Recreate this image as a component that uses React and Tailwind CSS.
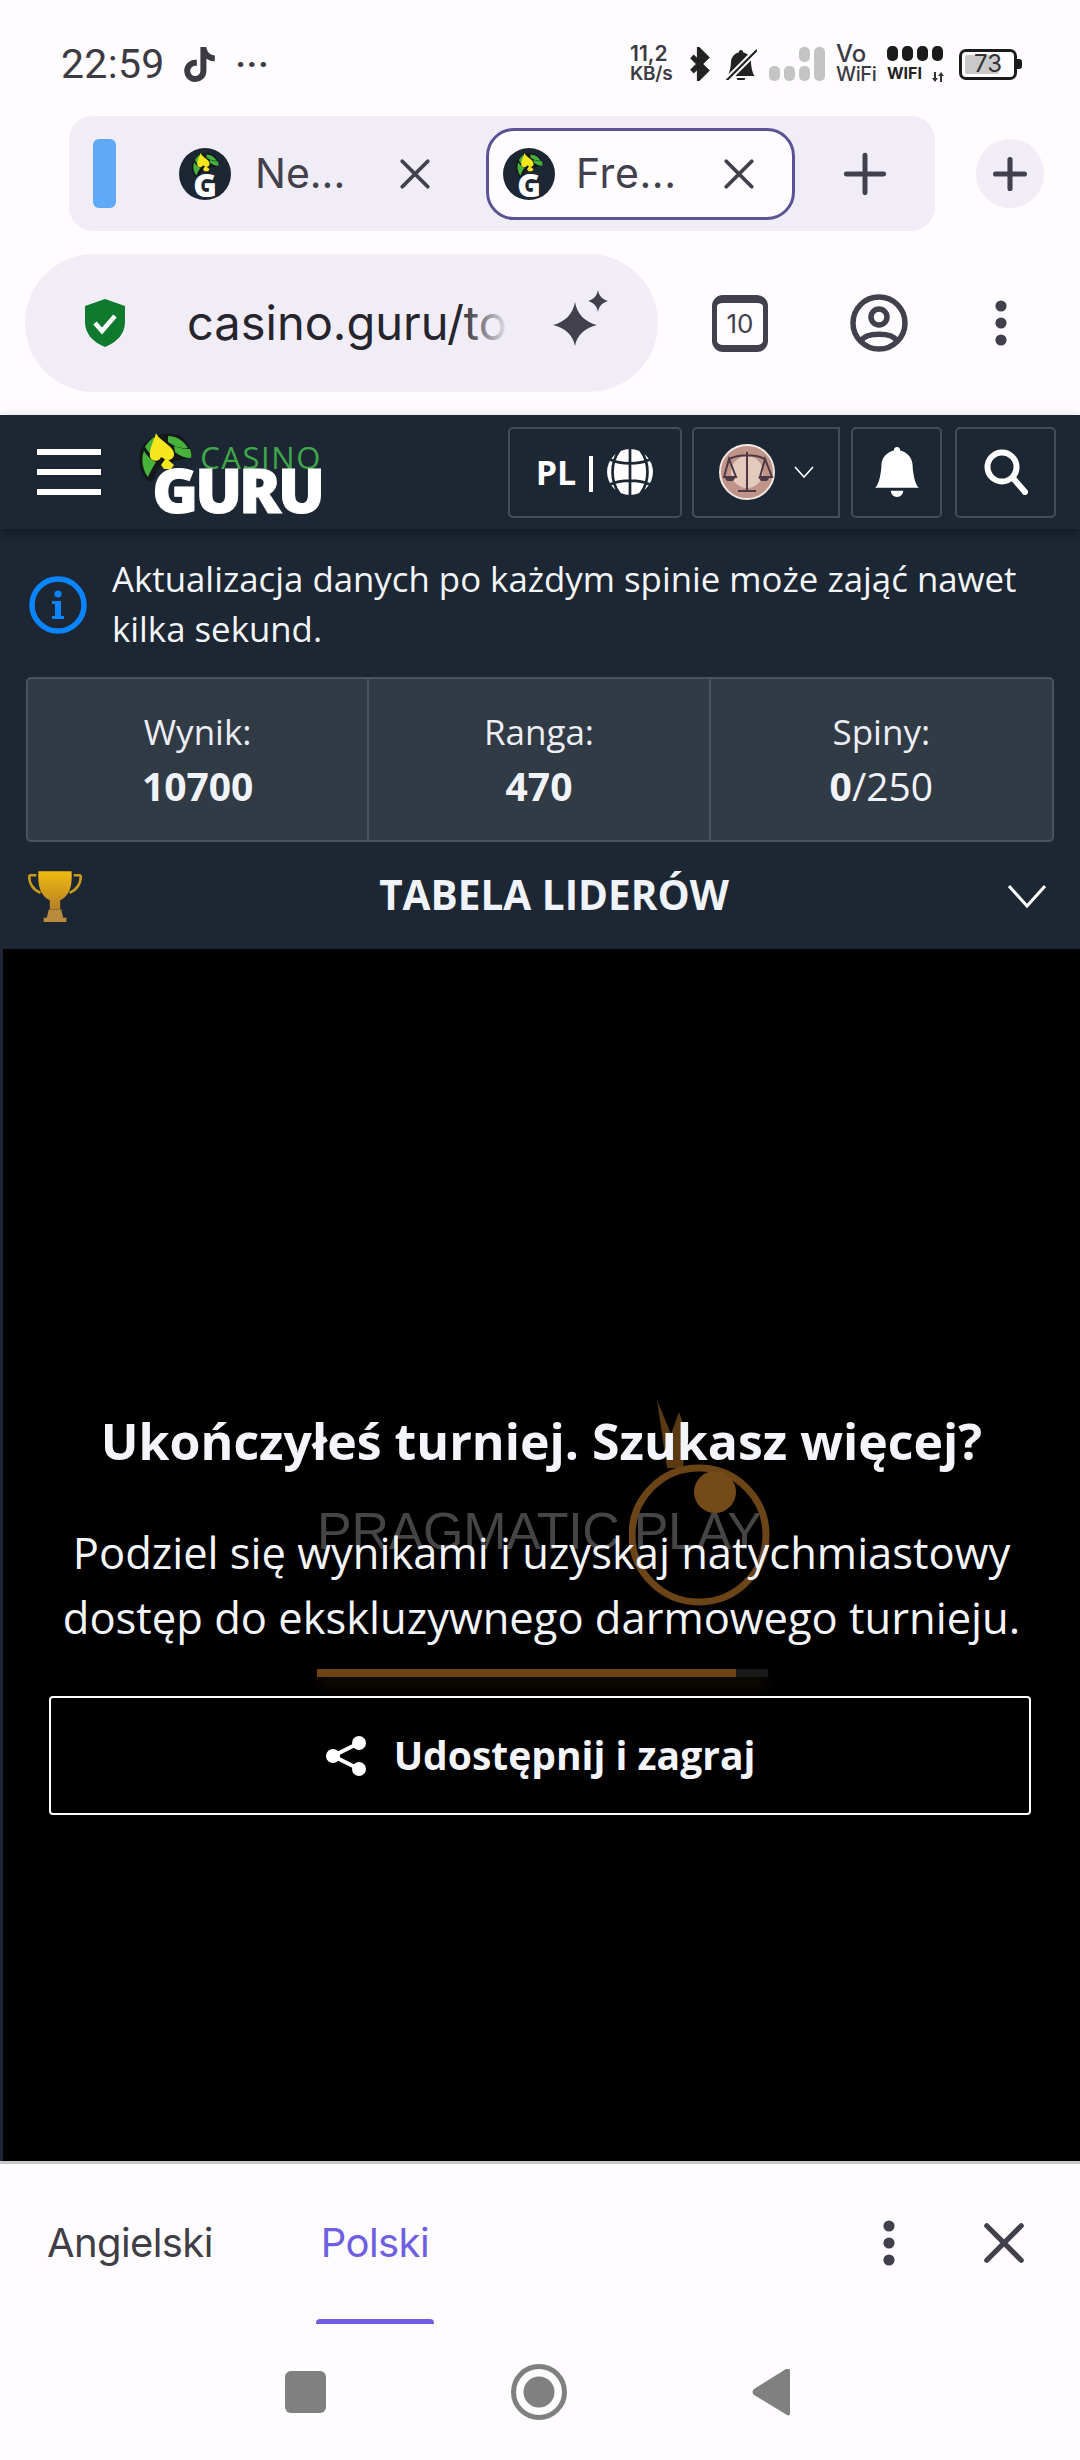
import { BsBellFill, BsBellSlashFill } from "react-icons/bs"
import { FaTiktok } from "react-icons/fa"

const site = { fontFamily: '"Open Sans", sans-serif' }
const ui = { fontFamily: 'Inter, Roboto, sans-serif' }

const Leaf = ({ className }) => (
  <svg viewBox="0 0 54 49" className={className}>
    <path d="M8 47C1 38-1 24 4 14 10 4 24-1 36 1c10 2 17 11 18 23L30 30 20 36 14 49z" fill="#14181a" />
    <path d="M10 44C4 36 3 26 6 18c3 5 7 9 12 11-3 5-6 10-8 15z" fill="#46b23c" />
    <path d="M7 14c3-5 6-8 9-10l2 10c-1 4-1 8 1 11-5-2-9-6-12-11z" fill="#46b23c" />
    <path d="M30 3c8 0 15 4 20 12-6 1-13-1-20-6z" fill="#46b23c" />
    <path d="M36 13c5 2 10 3 16 3 1 3 2 6 1 9-6 0-11-2-16-6z" fill="#46b23c" />
    <path d="M18 0c3 8 19 13 18 22-1 6-8 6-11 3-2-1-3 0-3 1-3 3-9 2-10-2C11 15 16 8 18 0z" fill="#f5e71c" />
    <path d="M28 25l8 7-3 4h-7l-3-4z" fill="#f5e71c" />
  </svg>
)

const Favicon = () => (
  <div className="relative w-[52px] h-[52px] rounded-full bg-[#1c2733] shrink-0">
    <Leaf className="absolute left-[12px] top-[5px] w-[28px] h-[25px]" />
    <span className="absolute inset-x-0 top-[23px] text-center text-[32px] leading-[28px] font-extrabold text-white" style={site}>G</span>
  </div>
)

const Close = ({ size = 34 }) => (
  <svg width={size} height={size} viewBox="0 0 32 32" fill="none" stroke="#43404d" strokeWidth="3.6" strokeLinecap="round">
    <path d="M4 4l24 24M28 4L4 28" />
  </svg>
)

const Plus = ({ size, stroke = 4.5 }) => (
  <svg width={size} height={size} viewBox="0 0 40 40" fill="none" stroke="#43404d" strokeWidth={stroke} strokeLinecap="round">
    <path d="M20 3v34M3 20h34" />
  </svg>
)

const Dots = ({ h = 46 }) => (
  <svg width="14" height={h} viewBox="0 0 14 46" fill="#43404d">
    <circle cx="7" cy="6" r="5.6" />
    <circle cx="7" cy="23" r="5.6" />
    <circle cx="7" cy="40" r="5.6" />
  </svg>
)

const Pip = ({ className }) => <span className={`w-[11px] rounded-[5px] ${className}`} />

const StatusBar = () => (
  <div className="h-[116px] flex items-start text-[#3c3a42]">
    <div className="flex items-center ml-[61px] mt-[46px] h-[36px]" style={{ fontFamily: 'Roboto, sans-serif' }}>
      <span className="text-[41px] leading-none tracking-[0.3px]">22:59</span>
      <FaTiktok className="ml-[17px] text-[35px]" />
      <span className="ml-[19px] text-[34px] font-bold leading-none tracking-[1px]">···</span>
    </div>
    <div className="ml-auto mr-[58px] mt-[43px] flex items-center h-[42px]" style={ui}>
      <div className="w-[48px] text-[21px] leading-[20px] font-semibold">
        <div>11,2</div>
        <div className="text-[19px] tracking-[-0.3px]">KB/s</div>
      </div>
      <svg viewBox="0 0 22 36" className="w-[21px] h-[34px] ml-[11px]" fill="none" stroke="#222" strokeWidth="5.5">
        <path d="M3 10l15 15-7 7V4l7 7L3 26" />
      </svg>
      <BsBellSlashFill className="ml-[15px] text-[32px] text-[#222]" />
      <div className="ml-[12px] flex items-end gap-[4px] h-[34px]">
        <Pip className="h-[15px] bg-[#c4c4c4]" />
        <Pip className="h-[15px] bg-[#c4c4c4]" />
        <div className="flex flex-col gap-[4px]">
          <Pip className="h-[15px] bg-[#c4c4c4]" />
          <Pip className="h-[15px] bg-[#c4c4c4]" />
        </div>
        <Pip className="h-[34px] bg-[#c4c4c4]" />
      </div>
      <div className="ml-[11px] w-[44px] text-[24px] leading-[21px] font-medium">
        <div>Vo</div>
        <div className="text-[20px] tracking-[-0.4px]">WiFi</div>
      </div>
      <div className="ml-[7px] w-[58px]">
        <div className="flex gap-[4px]">
          <Pip className="h-[15px] bg-[#1b1b1b]" />
          <Pip className="h-[15px] bg-[#1b1b1b]" />
          <Pip className="h-[15px] bg-[#1b1b1b]" />
          <Pip className="h-[15px] bg-[#1b1b1b]" />
        </div>
        <div className="flex items-end mt-[3px]">
          <span className="text-[16px] leading-[18px] font-bold text-[#222]">WIFI</span>
          <svg viewBox="0 0 14 10" className="ml-auto w-[14px] h-[10px]" fill="#333">
            <path d="M3 0h2v6h2L4 10 1 6h2zM9 10h2V4h2l-3-4-3 4h2z" />
          </svg>
        </div>
      </div>
      <div className="ml-[14px] flex items-center">
        <div className="w-[58px] h-[31px] rounded-[7px] border-[3px] border-[#1b1b1b] p-[3px] flex items-stretch relative">
          <div className="w-[73%] bg-[#c9c9c9] rounded-[2px]" />
          <span className="absolute inset-0 flex items-center justify-center text-[24px] leading-none text-[#333]">73</span>
        </div>
        <span className="w-[5px] h-[10px] bg-[#1b1b1b] rounded-r-[3px]" />
      </div>
    </div>
  </div>
)

const TabStrip = () => (
  <div className="flex items-center">
    <div className="ml-[69px] w-[866px] h-[115px] rounded-[24px] bg-[#f1edf7] flex items-center" style={ui}>
      <div className="ml-[24px] w-[23px] h-[69px] rounded-[6px] bg-[#60a9f6]" />
      <div className="ml-[63px] flex items-center w-[307px]">
        <Favicon />
        <span className="ml-[24px] text-[41px] text-[#43404d]">Ne...</span>
        <span className="ml-auto mr-[54px]"><Close /></span>
      </div>
      <div className="w-[309px] h-[92px] rounded-[28px] border-[3px] border-[#5c5294] bg-[#fefcff] flex items-center pl-[14px]">
        <Favicon />
        <span className="ml-[21px] text-[41px] tracking-[0.6px] text-[#43404d]">Fre...</span>
        <span className="ml-auto mr-[36px]"><Close /></span>
      </div>
      <div className="ml-[48px]"><Plus size={44} /></div>
    </div>
    <div className="ml-[41px] w-[68px] h-[69px] rounded-full bg-[#f1edf7] flex items-center justify-center">
      <Plus size={34} stroke={6} />
    </div>
  </div>
)

const UrlBar = () => (
  <div className="mt-[23px] h-[138px] flex items-center">
    <div className="ml-[25px] w-[633px] h-[138px] rounded-[69px] bg-[#f1edf7] flex items-center" style={ui}>
      <svg viewBox="0 0 40 48" className="ml-[60px] w-[40px] h-[48px]">
        <path d="M20 0l20 7v16c0 12-8 20-20 25C8 43 0 35 0 23V7z" fill="#0f7a2e" />
        <path d="M10 24l7 8 13-15" fill="none" stroke="#fff" strokeWidth="4.5" />
      </svg>
      <div className="ml-[62px] w-[323px] whitespace-nowrap relative text-[47px] leading-[60px] text-[#26242c]">
        casino.guru/to
        <div className="absolute right-0 top-0 bottom-0 w-[50px] bg-gradient-to-r from-[#f1edf7]/0 to-[#f1edf7]" />
      </div>
      <svg viewBox="0 0 58 56" className="ml-[41px] w-[58px] h-[56px] -mt-[10px]" fill="#43404d">
        <path d="M24 12c2 12 10 20 22 23-12 3-20 10-22 21-2-11-10-18-22-21 12-3 20-11 22-23z" />
        <path d="M47 0c1 6 4 9 10 11-6 2-9 5-10 11-1-6-4-9-10-11 6-2 9-5 10-11z" />
      </svg>
    </div>
    <div className="ml-[54px] w-[56px] h-[57px] rounded-[11px] border-[5px] border-t-[8px] border-b-[7px] border-[#43404d] flex items-center justify-center text-[26px] text-[#43404d]" style={ui}>10</div>
    <svg viewBox="0 0 58 58" className="ml-[82px] w-[58px] h-[58px]" fill="none" stroke="#43404d" strokeWidth="5.5">
      <circle cx="29" cy="29" r="26" />
      <circle cx="29" cy="23" r="8" />
      <path d="M11 47c5-9 31-9 36 0" />
    </svg>
    <div className="ml-[86px]"><Dots /></div>
  </div>
)

const HeadBox = ({ className, children }) => (
  <div className={`h-[91px] rounded-[5px] border-2 border-[#424d58] flex items-center justify-center ${className}`}>{children}</div>
)

const SiteHeader = () => (
  <div className="mt-[23px] h-[114px] bg-[#1c2733] flex items-center text-white relative z-10 shadow-[0_4px_10px_rgba(0,0,0,0.35)]">
    <div className="ml-[37px] w-[64px] flex flex-col gap-[14px]">
      <span className="h-[6px] bg-white" />
      <span className="h-[6px] bg-white" />
      <span className="h-[6px] bg-white" />
    </div>
    <div className="ml-[37px] w-[184px] h-[88px] relative" style={site}>
      <Leaf className="absolute left-0 top-[5px] w-[54px] h-[49px]" />
      <span className="absolute right-0 top-[18px] text-[31px] leading-[22px] text-[#3fa74a] tracking-[1.6px]">CASINO</span>
      <span className="absolute right-0 top-[37px] text-[62px] leading-[48px] font-extrabold text-white tracking-[-3px] [-webkit-text-stroke:1px_white]">GURU</span>
    </div>
    <HeadBox className="ml-[186px] w-[174px] gap-[13px]">
      <span className="text-[34px] font-bold leading-none" style={site}>PL</span>
      <span className="w-[4px] h-[36px] bg-white mt-[4px]" />
      <svg viewBox="0 0 46 46" className="w-[48px] h-[48px]" fill="#fff" stroke="#1c2733" strokeWidth="2.6">
        <circle cx="23" cy="23" r="22" stroke="none" />
        <path d="M23 0v46M13 2c-9 12-9 30 0 42M33 2c9 12 9 30 0 42M4 11c10 5 28 5 38 0M4 35c10-5 28-5 38 0" fill="none" />
      </svg>
    </HeadBox>
    <HeadBox className="ml-[10px] w-[148px] rounded-r-none gap-[19px]">
      <svg viewBox="0 0 56 56" className="w-[56px] h-[56px]">
        <circle cx="28" cy="28" r="27" fill="#c09488" stroke="#f1e7e3" strokeWidth="2" />
        <circle cx="28" cy="28" r="16" fill="#e3cabd" />
        <path d="M28 8v40M10 15c10-5 26-5 36 0M10 15l-5 18h12zM46 15l-5 18h12zM19 47h18" fill="none" stroke="#4b3a45" strokeWidth="2" />
        <path d="M5 33h12l-3 4H8zM39 33h12l-3 4h-6z" fill="#4b3a45" />
      </svg>
      <svg viewBox="0 0 20 12" className="w-[20px] h-[12px]" fill="none" stroke="#fff" strokeWidth="1.6">
        <path d="M1 1l9 10 9-10" />
      </svg>
    </HeadBox>
    <HeadBox className="ml-[11px] w-[91px]">
      <BsBellFill className="text-[50px]" />
    </HeadBox>
    <HeadBox className="ml-[13px] w-[101px]">
      <svg viewBox="0 0 44 46" className="w-[44px] h-[46px]" fill="none" stroke="#fff" strokeWidth="6" strokeLinecap="round">
        <circle cx="18" cy="18" r="14.5" />
        <path d="M29 29l12 14" />
      </svg>
    </HeadBox>
  </div>
)

const Stat = ({ label, children, last }) => (
  <div className={`flex flex-col items-center pt-[30px] ${last ? "" : "border-r-2 border-[#4a545f]"}`}>
    <span className="text-[35px] leading-[46px] text-[#eceef4]">{label}</span>
    <span className="text-[39px] leading-[50px] mt-[6px] text-[#f1f3fa]">{children}</span>
  </div>
)

const Trophy = () => (
  <svg viewBox="0 0 56 50" className="w-[58px] h-[52px]">
    <defs>
      <linearGradient id="gold" x1="0" y1="0" x2="0" y2="1">
        <stop offset="0" stopColor="#f0bc11" />
        <stop offset="1" stopColor="#b57f26" />
      </linearGradient>
    </defs>
    <path d="M12 1h32c1 14-2 24-11 28v9h-10v-9C14 25 11 15 12 1z" fill="url(#gold)" />
    <path d="M3 5h7M46 5h7M3 5c0 9 4 14 11 17M53 5c0 9-4 14-11 17" fill="none" stroke="#c99b1b" strokeWidth="2.4" />
    <path d="M22 38h12l2 8h-16zM17 46h22v4H17z" fill="#b98a3d" />
  </svg>
)

const Stats = () => (
  <div className="bg-[#1c2733] h-[420px] pl-[3px]" style={site}>
    <div className="flex items-start pt-[28px] pl-[26px] h-[148px]">
      <svg viewBox="0 0 58 58" className="w-[58px] h-[58px] mt-[19px] shrink-0" fill="none">
        <circle cx="29" cy="29" r="26" stroke="#0a84ff" strokeWidth="5.5" />
        <path d="M23 25h9v15h3v3H23v-3h3V28h-3z" fill="#0a84ff" />
        <circle cx="29" cy="18" r="3.6" fill="#0a84ff" />
      </svg>
      <p className="ml-[25px] text-[34.8px] leading-[50px] text-[#f3f5fa] -mt-[3px] whitespace-nowrap">Aktualizacja danych po każdym spinie może zająć nawet<br />kilka sekund.</p>
    </div>
    <div className="ml-[23px] w-[1028px] h-[165px] grid grid-cols-3 rounded-[5px] border-2 border-[#4a545f] bg-[#313b46]">
      <Stat label="Wynik:"><b>10700</b></Stat>
      <Stat label="Ranga:"><b>470</b></Stat>
      <Stat label="Spiny:" last><b>0</b>/250</Stat>
    </div>
    <div className="ml-[23px] mr-[34px] h-[107px] flex items-center justify-between">
      <Trophy />
      <span className="text-[40.5px] font-bold text-[#f1f3fa] ml-[16px]">TABELA LIDERÓW</span>
      <svg viewBox="0 0 38 24" className="w-[38px] h-[24px]" fill="none" stroke="#fff" strokeWidth="3">
        <path d="M1 2l18 20 18-20" />
      </svg>
    </div>
  </div>
)

const Tournament = () => (
  <div className="h-[1212px] bg-black border-l-[3px] border-[#1c2733] relative text-white flex flex-col items-center" style={site}>
    {/* loader that shines through behind the message */}
    <div className="absolute left-[314px] top-[451px] w-[451px] h-[280px]">
      <svg viewBox="0 0 141 207" className="absolute left-[312px] top-0 w-[141px] h-[207px]" fill="none">
        <path d="M28 0l14 34 8-22 7 20-3 36H38z" fill="#5a3a13" />
        <circle cx="70" cy="135" r="67" stroke="#6b4417" strokeWidth="7" />
        <circle cx="86" cy="92" r="21" fill="#744a19" />
      </svg>
      <span className="absolute left-0 top-[101px] text-[52px] leading-[60px] text-[#454545] tracking-[-0.3px] whitespace-nowrap" style={{ fontFamily: '"Liberation Sans", sans-serif' }}>PRAGMATIC PLAY</span>
      <div className="absolute left-0 top-[269px] w-[451px] h-[8px] bg-[#191919] shadow-[0_8px_14px_rgba(107,66,22,0.25)]">
        <div className="w-[93%] h-full bg-[#6d4314]" />
      </div>
    </div>
    <h2 className="relative mt-[462px] text-[50px] leading-[60px] font-bold text-[#f4f5fb] whitespace-nowrap">Ukończyłeś turniej. Szukasz więcej?</h2>
    <p className="relative mt-[49px] text-[43.5px] leading-[65px] text-center text-[#f4f5fb] whitespace-nowrap">Podziel się wynikami i uzyskaj natychmiastowy<br />dostęp do ekskluzywnego darmowego turnieju.</p>
    <button className="relative mt-[46px] w-[982px] h-[119px] -ml-[3px] border-2 border-white rounded-[4px] flex items-center justify-center gap-[27px] text-[39px] font-bold text-[#f4f5fb]">
      <svg viewBox="0 0 42 40" className="w-[42px] h-[40px]" fill="#fff" stroke="#fff" strokeWidth="4">
        <path d="M34 7L8 20l26 13" fill="none" />
        <circle cx="34" cy="7" r="5" />
        <circle cx="8" cy="20" r="5" />
        <circle cx="34" cy="33" r="5" />
      </svg>
      Udostępnij i zagraj
    </button>
  </div>
)

const TranslateBar = () => (
  <div className="h-[299px] bg-[#fefcfe] border-t-[3px] border-[#c8c8ca]" style={ui}>
    <div className="h-[157px] relative flex items-center mb-[3px]">
      <span className="ml-[47px] text-[40px] text-[#3f3d45] tracking-[-0.6px]">Angielski</span>
      <div className="ml-[103px] h-full relative flex items-center">
        <span className="text-[40px] text-[#6f5fe0] px-[5px] tracking-[-0.6px]">Polski</span>
        <span className="absolute left-0 right-0 -bottom-[3px] h-[5px] rounded-t-[4px] bg-[#6f5fe0]" />
      </div>
      <div className="ml-auto"><Dots /></div>
      <div className="ml-[85px] mr-[53px]"><Close size={46} /></div>
    </div>
    <div className="h-[136px] flex items-center pl-[285px]">
      <div className="w-[41px] h-[42px] rounded-[6px] bg-[#808080]" />
      <svg viewBox="0 0 56 56" className="ml-[185px] w-[56px] h-[56px]" fill="none">
        <circle cx="28" cy="28" r="25.5" stroke="#808080" strokeWidth="5" />
        <circle cx="28" cy="28" r="15.5" fill="#808080" />
      </svg>
      <svg viewBox="0 0 38 48" className="ml-[185px] w-[38px] h-[48px]" fill="#808080">
        <path d="M37 1c1 0 1 1 1 2v42c0 2-1 3-3 2L2 27c-2-2-2-4 0-6L34 1z" />
      </svg>
    </div>
  </div>
)

export default function App() {
  return (
    <div className="w-[1080px] h-[2460px] bg-[#fefcfe] overflow-hidden">
      <StatusBar />
      <TabStrip />
      <UrlBar />
      <SiteHeader />
      <Stats />
      <Tournament />
      <TranslateBar />
    </div>
  )
}
